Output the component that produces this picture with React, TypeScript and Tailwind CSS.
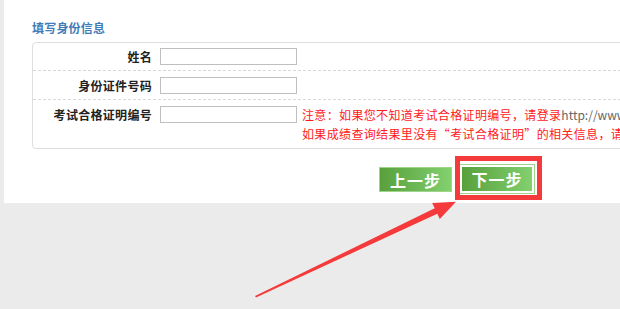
export default function App() {
  const font = { fontFamily: '"Noto Sans CJK SC", "Liberation Sans", sans-serif' };
  return (
    <div className="relative h-[309px] w-[620px] overflow-hidden bg-[#ebebeb]" style={font}>
      <div className="ml-[4px] h-[203px] w-[720px] bg-white pl-[28px] pt-[21px]">
        <h3 className="text-[12px] font-bold leading-[14px] tracking-[0.2px] text-[#3f7cb8]">填写身份信息</h3>

        <div className="mt-[7px] w-[680px] rounded-[4px] border border-[#dedede]">
          <div className="flex border-b border-dashed border-[#d8d8d8] pb-[5px] pt-[5px]">
            <label className="w-[119px] shrink-0 text-right text-[12px] font-bold leading-[17px] tracking-[0.3px] text-[#222]">姓名</label>
            <input className="ml-[8px] h-[17px] w-[137px] shrink-0 border border-[#bfbfbf] bg-white outline-none" />
          </div>
          <div className="flex border-b border-dashed border-[#d8d8d8] pb-[5px] pt-[6px]">
            <label className="w-[119px] shrink-0 text-right text-[12px] font-bold leading-[17px] tracking-[0.3px] text-[#222]">身份证件号码</label>
            <input className="ml-[8px] h-[17px] w-[137px] shrink-0 border border-[#bfbfbf] bg-white outline-none" />
          </div>
          <div className="flex items-start pb-[5px] pt-[6px]">
            <label className="w-[119px] shrink-0 text-right text-[12px] font-bold leading-[17px] tracking-[0.3px] text-[#222]">考试合格证明编号</label>
            <input className="ml-[8px] h-[17px] w-[137px] shrink-0 border border-[#bfbfbf] bg-white outline-none" />
            <div className="-mt-[1px] ml-[5px] shrink-0 whitespace-nowrap text-[12px] leading-[19px] tracking-[0.35px] text-[#ff1a1a]">
              <p>
                注意：如果您不知道考试合格证明编号，请登录<span className="tracking-normal text-[#666]">http://www.</span>
              </p>
              <p>如果成绩查询结果里没有“考试合格证明”的相关信息，请从</p>
            </div>
          </div>
        </div>

        <div className="ml-[347px] mt-[18px] flex gap-[8px]">
          <button className="h-[25px] w-[73px] border border-[#9fd48d] bg-linear-to-r from-[#58a03c] to-[#82d06e] text-[16px] font-bold leading-[22px] tracking-[1px] text-white">
            上一步
          </button>
          <button className="-mt-[2px] h-[28px] w-[74px] border-2 border-white bg-linear-to-r from-[#58a03c] to-[#82d06e] text-[16px] font-bold leading-[24px] tracking-[1px] text-white outline outline-1 outline-[#9fd48d]">
            下一步
          </button>
        </div>
      </div>

      {/* annotation: red box + arrow */}
      <div className="absolute left-[455px] top-[156px] h-[44px] w-[87px] border-[5px] border-[#f43a3a]" />
      <svg className="absolute left-0 top-0" width="620" height="309" viewBox="0 0 620 309">
        <polygon
          points="255,296 434.7,208.3 432.2,202.9 456,201.7 439.8,219.1 437.3,213.7 256,297.5"
          fill="#f43a3a"
        />
      </svg>
    </div>
  );
}
